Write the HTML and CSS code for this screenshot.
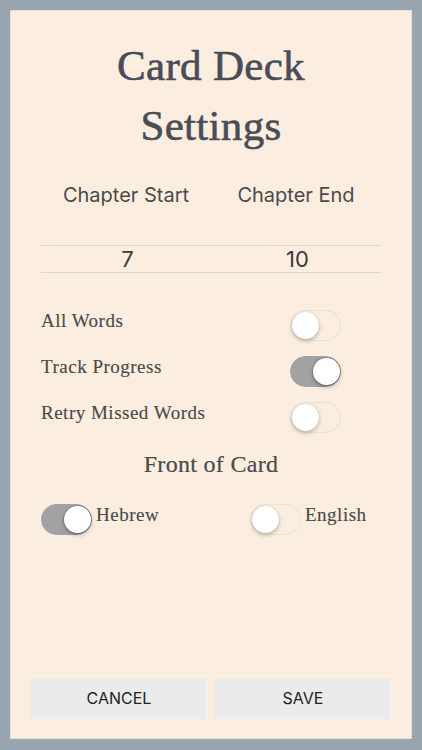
FILE: index.html
```html
<!DOCTYPE html>
<html>
<head>
<meta charset="utf-8">
<link rel="stylesheet" href="styles.css">
</head>
<body>
<div class="panel">
  <div class="content">
    <h1 class="title">Card Deck<br>Settings</h1>
    <div class="chapters">
      <div class="chap-label">Chapter Start</div>
      <div class="chap-label">Chapter End</div>
    </div>
    <div class="numbers">
      <div class="num">7</div>
      <div class="num">10</div>
    </div>
    <div class="options">
      <div class="opt-row">
        <span class="opt-label">All Words</span>
        <span class="toggle"><span class="knob"></span></span>
      </div>
      <div class="opt-row">
        <span class="opt-label">Track Progress</span>
        <span class="toggle on"><span class="knob"></span></span>
      </div>
      <div class="opt-row">
        <span class="opt-label">Retry Missed Words</span>
        <span class="toggle"><span class="knob"></span></span>
      </div>
    </div>
    <h2 class="subtitle">Front of Card</h2>
    <div class="front">
      <div class="front-item">
        <span class="toggle on"><span class="knob"></span></span>
        <span class="front-label">Hebrew</span>
      </div>
      <div class="front-item">
        <span class="toggle"><span class="knob"></span></span>
        <span class="front-label">English</span>
      </div>
    </div>
  </div>
  <div class="buttons">
    <div class="btn">CANCEL</div>
    <div class="btn">SAVE</div>
  </div>
</div>
</body>
</html>
```

FILE: styles.css
```css
html, body {
  margin: 0;
  padding: 0;
}
body {
  background: #9aa6af;
  width: 422px;
  height: 750px;
  padding: 10px;
  box-sizing: border-box;
}
.panel {
  box-sizing: border-box;
  width: 402px;
  height: 729px;
  background: #fbeee0;
  border: 1px solid #e2ddd6;
  padding: 0 20px 19px;
  display: flex;
  flex-direction: column;
}
.content {
  padding: 0 10px;
}
.title {
  margin: 25px 0 0;
  font-family: "Liberation Serif", serif;
  font-weight: normal;
  font-size: 43px;
  line-height: 60px;
  color: #4a4d55;
  text-align: center;
  letter-spacing: 0.3px;
  -webkit-text-stroke: 0.6px #4a4d55;
}
.chapters {
  display: grid;
  grid-template-columns: 1fr 1fr;
  margin-top: 27px;
}
.chap-label {
  font-family: "Inter", "Liberation Sans", sans-serif;
  font-size: 20px;
  line-height: 24px;
  color: #4a4a4a;
  text-align: center;
}
.numbers {
  display: grid;
  grid-template-columns: 1fr 1fr;
  margin-top: 38px;
  border-top: 1px solid #e0d7cc;
  border-bottom: 1px solid #e0d7cc;
  height: 26px;
}
.num {
  font-family: "Inter", "Liberation Sans", sans-serif;
  font-size: 22px;
  line-height: 26px;
  color: #3a3a3a;
  text-align: center;
  padding-left: 3px;
}
.options {
  margin-top: 37px;
  display: flex;
  flex-direction: column;
  gap: 15px;
}
.opt-row {
  display: grid;
  grid-template-columns: 249px 51px;
  align-items: start;
}
.opt-label, .front-label {
  font-family: "Liberation Serif", serif;
  font-size: 19px;
  line-height: 22px;
  color: #4a4a4a;
  letter-spacing: 0.5px;
  -webkit-text-stroke: 0.15px #4a4a4a;
}
.toggle {
  position: relative;
  box-sizing: border-box;
  display: block;
  flex: none;
  width: 51px;
  height: 31px;
  border-radius: 16px;
  border: 1.5px solid #e8e1d8;
  background: transparent;
}
.toggle.on {
  background: #a2a2a2;
  border-color: #a2a2a2;
}
.knob {
  position: absolute;
  top: 0.5px;
  left: 0.5px;
  width: 27px;
  height: 27px;
  border-radius: 50%;
  background: #fff;
  box-shadow: 0 2px 4px rgba(0, 0, 0, 0.25), 0 0 1px rgba(0, 0, 0, 0.2);
}
.toggle.on .knob {
  left: auto;
  right: 0.5px;
  box-shadow: 0 2px 4px rgba(0, 0, 0, 0.3), 0 0 0 1px rgba(120, 120, 120, 0.5);
}
.subtitle {
  margin: 17px 0 0;
  font-family: "Liberation Serif", serif;
  font-weight: normal;
  font-size: 24px;
  line-height: 28px;
  color: #4a4a4a;
  text-align: center;
  letter-spacing: 0.3px;
  -webkit-text-stroke: 0.2px #4a4a4a;
}
.front {
  margin-top: 26px;
  display: grid;
  grid-template-columns: 209px auto;
}
.front-item {
  display: flex;
  align-items: flex-start;
  gap: 4px;
}
.buttons {
  margin-top: auto;
  display: grid;
  grid-template-columns: 1fr 1fr;
  gap: 8px;
}
.btn {
  height: 41px;
  background: #ebebeb;
  font-family: "Inter", "Liberation Sans", sans-serif;
  font-size: 16px;
  line-height: 41px;
  text-align: center;
  color: #222;
}
```
